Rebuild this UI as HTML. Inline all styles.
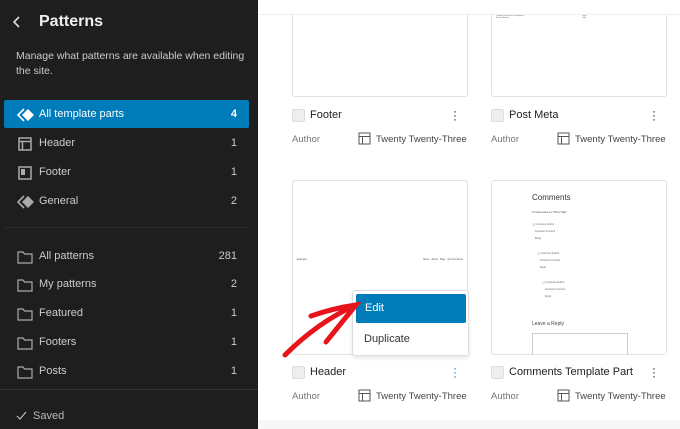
<!DOCTYPE html>
<html><head><style>
*{box-sizing:border-box;margin:0;padding:0}
body{width:680px;height:429px;overflow:hidden;background:#fff;font-family:"Liberation Sans",sans-serif;position:relative}
.sb{position:absolute;left:0;top:0;width:258px;height:429px;background:#1e1e1e;color:#e0e0e0}
.t{position:absolute;white-space:nowrap}
.it{position:absolute;left:4px;width:245px;height:28px;font-size:11px;color:#ccc}
.it .l{position:absolute;left:35px;top:8px}
.it .n{position:absolute;right:12px;top:8px}
.it svg{position:absolute;left:13px;top:7px}
.card{position:absolute;border:1px solid #e2e2e2;border-radius:3px;background:#fff}
.cb{position:absolute;width:13px;height:13px;background:#eee;border:1px solid #ddd;border-radius:2px}
.title{position:absolute;font-size:11px;color:#1e1e1e}
.au{position:absolute;font-size:9.5px;color:#757575}
</style></head><body>
<div style="position:absolute;left:258px;top:0;width:422px;height:15px;background:#fff;border-bottom:1px solid #eee;z-index:2"></div>

<div class="card" style="left:292px;top:-10px;width:176px;height:107px"></div>
<div class="card" style="left:491px;top:-10px;width:176px;height:107px">
<div class="t" style="left:4px;top:24px;font-size:2px;color:#666">Posted Post Date in Categories<br>by Post Author</div>
<div class="t" style="left:90px;top:24px;font-size:2px;color:#666">Tags<br>Tags</div>
</div>
<div class="cb" style="left:292px;top:109px"></div><div class="title" style="left:310px;top:109px">Footer</div>
<div class="cb" style="left:491px;top:109px"></div><div class="title" style="left:509px;top:109px">Post Meta</div>
<div class="t" style="left:453px;top:109px;font-size:12px;color:#1e1e1e;line-height:4px">·<br>·<br>·</div>
<div class="t" style="left:652px;top:109px;font-size:12px;color:#1e1e1e;line-height:4px">·<br>·<br>·</div>
<div class="au" style="left:292px;top:134px">Author</div>
<svg class="t" style="left:358px;top:132px" width="13" height="13"><rect x="1" y="1" width="11" height="11" fill="none" stroke="#555"/><path d="M1 4.5H12M4.5 4.5V12" stroke="#555"/></svg>
<div class="au" style="left:376px;top:134px;color:#444">Twenty Twenty-Three</div>
<div class="au" style="left:491px;top:134px">Author</div>
<svg class="t" style="left:557px;top:132px" width="13" height="13"><rect x="1" y="1" width="11" height="11" fill="none" stroke="#555"/><path d="M1 4.5H12M4.5 4.5V12" stroke="#555"/></svg>
<div class="au" style="left:575px;top:134px;color:#444">Twenty Twenty-Three</div>

<div class="card" style="left:292px;top:180px;width:176px;height:175px">
<div class="t" style="left:4px;top:77px;font-size:2.5px;color:#555">Example</div>
<div class="t" style="right:4px;top:77px;font-size:2.5px;color:#555">Home &nbsp; About &nbsp; Blog &nbsp; Join the Event</div>
</div>
<div class="card" style="left:491px;top:180px;width:176px;height:175px;overflow:hidden">
<div class="t" style="left:40px;top:12px;font-size:8px;color:#333">Comments</div>
<div class="t" style="left:40px;top:29px;font-size:3px;color:#444">3 responses to "Post Title"</div>
<div class="t" style="left:40px;top:40px;font-size:2.5px;color:#666;line-height:7px">◯ Comment Author<br>&nbsp;&nbsp;&nbsp;&nbsp;Comment Content<br>&nbsp;&nbsp;&nbsp;&nbsp;Reply</div>
<div class="t" style="left:45px;top:69px;font-size:2.5px;color:#666;line-height:7px">◯ Comment Author<br>&nbsp;&nbsp;&nbsp;&nbsp;Comment Content<br>&nbsp;&nbsp;&nbsp;&nbsp;Reply</div>
<div class="t" style="left:50px;top:98px;font-size:2.5px;color:#666;line-height:7px">◯ Comment Author<br>&nbsp;&nbsp;&nbsp;&nbsp;Comment Content<br>&nbsp;&nbsp;&nbsp;&nbsp;Reply</div>
<div class="t" style="left:40px;top:140px;font-size:5px;color:#444">Leave a Reply</div>
<div style="position:absolute;left:40px;top:152px;width:96px;height:30px;border:1px solid #ccc"></div>
</div>
<div class="cb" style="left:292px;top:366px"></div><div class="title" style="left:310px;top:366px">Header</div>
<div class="cb" style="left:491px;top:366px"></div><div class="title" style="left:509px;top:366px">Comments Template Part</div>
<div class="t" style="left:453px;top:366px;font-size:12px;color:#007cba;line-height:4px">·<br>·<br>·</div>
<div class="t" style="left:652px;top:366px;font-size:12px;color:#1e1e1e;line-height:4px">·<br>·<br>·</div>
<div class="au" style="left:292px;top:391px">Author</div>
<svg class="t" style="left:358px;top:389px" width="13" height="13"><rect x="1" y="1" width="11" height="11" fill="none" stroke="#555"/><path d="M1 4.5H12M4.5 4.5V12" stroke="#555"/></svg>
<div class="au" style="left:376px;top:391px;color:#444">Twenty Twenty-Three</div>
<div class="au" style="left:491px;top:391px">Author</div>
<svg class="t" style="left:557px;top:389px" width="13" height="13"><rect x="1" y="1" width="11" height="11" fill="none" stroke="#555"/><path d="M1 4.5H12M4.5 4.5V12" stroke="#555"/></svg>
<div class="au" style="left:575px;top:391px;color:#444">Twenty Twenty-Three</div>
<div style="position:absolute;left:258px;top:420px;width:422px;height:9px;background:#f7f7f7"></div>

<div style="position:absolute;left:352px;top:290px;width:117px;height:66px;background:#fff;border:1px solid #ddd;border-radius:3px;box-shadow:0 2px 4px rgba(0,0,0,.1)">
<div style="position:absolute;left:3px;top:3px;width:110px;height:29px;background:#007cba;border-radius:2px;color:#fff;font-size:11px;padding:8px 0 0 9px">Edit</div>
<div class="t" style="left:11px;top:42px;font-size:11px;color:#333">Duplicate</div>
</div>
<svg style="position:absolute;left:0;top:0" width="680" height="429"><g stroke="#e8141b" stroke-width="5" stroke-linecap="round" fill="none"><path d="M285 355 Q318 322 356 305"/><path d="M311 316 Q334 308 356 305 Q342 322 326 342"/></g></svg>

<div class="sb">
<svg class="t" style="left:12px;top:15px" width="10" height="14"><path d="M7 2L2 7L7 12" stroke="#ddd" stroke-width="1.6" fill="none"/></svg>
<div class="t" style="left:39px;top:13px;font-size:16px;font-weight:bold;color:#f0f0f0">Patterns</div>
<div class="t" style="left:16px;top:49px;font-size:10.5px;line-height:15px;color:#ccc">Manage what patterns are available when editing<br>the site.</div>
<div class="it" style="top:100px;background:#007cba;border-radius:2px;color:#fff">
<svg width="18" height="16" viewBox="0 0 18 16"><path d="M7 2L1 8L7 14" stroke="#fff" stroke-width="1.6" fill="none"/><path d="M11 2L17 8L11 14L5 8Z" fill="#fff"/></svg><span class="l">All template parts</span><span class="n" style="font-weight:bold">4</span></div>
<div class="it" style="top:129px"><svg width="16" height="16"><rect x="2" y="2" width="12" height="12" fill="none" stroke="#aaa" stroke-width="1.5"/><path d="M2 5.5H14M5.5 5.5V14" stroke="#aaa" stroke-width="1.5"/></svg><span class="l">Header</span><span class="n">1</span></div>
<div class="it" style="top:158px"><svg width="16" height="16"><rect x="2" y="2" width="12" height="12" fill="none" stroke="#aaa" stroke-width="1.5"/><rect x="4" y="4" width="4" height="6" fill="#aaa"/></svg><span class="l">Footer</span><span class="n">1</span></div>
<div class="it" style="top:187px"><svg width="18" height="16" viewBox="0 0 18 16"><path d="M7 2L1 8L7 14" stroke="#aaa" stroke-width="1.6" fill="none"/><path d="M11 2L17 8L11 14L5 8Z" fill="#aaa"/></svg><span class="l">General</span><span class="n">2</span></div>
<div style="position:absolute;left:4px;top:227px;width:245px;height:1px;background:#2c2c2c"></div>
<div class="it" style="top:242px"><svg width="16" height="16"><path d="M1 3H6L7.5 5H15V14H1Z" fill="none" stroke="#aaa" stroke-width="1.2"/></svg><span class="l">All patterns</span><span class="n">281</span></div>
<div class="it" style="top:270px"><svg width="16" height="16"><path d="M1 3H6L7.5 5H15V14H1Z" fill="none" stroke="#aaa" stroke-width="1.2"/></svg><span class="l">My patterns</span><span class="n">2</span></div>
<div class="it" style="top:299px"><svg width="16" height="16"><path d="M1 3H6L7.5 5H15V14H1Z" fill="none" stroke="#aaa" stroke-width="1.2"/></svg><span class="l">Featured</span><span class="n">1</span></div>
<div class="it" style="top:328px"><svg width="16" height="16"><path d="M1 3H6L7.5 5H15V14H1Z" fill="none" stroke="#aaa" stroke-width="1.2"/></svg><span class="l">Footers</span><span class="n">1</span></div>
<div class="it" style="top:357px"><svg width="16" height="16"><path d="M1 3H6L7.5 5H15V14H1Z" fill="none" stroke="#aaa" stroke-width="1.2"/></svg><span class="l">Posts</span><span class="n">1</span></div>
<div style="position:absolute;left:0;top:389px;width:258px;height:1px;background:#333"></div>
<svg class="t" style="left:16px;top:411px" width="12" height="10"><path d="M1 5L4 8L10 1" stroke="#bbb" stroke-width="1.2" fill="none"/></svg>
<div class="t" style="left:33px;top:410px;font-size:11px;color:#bbb">Saved</div>
</div>
</body></html>
